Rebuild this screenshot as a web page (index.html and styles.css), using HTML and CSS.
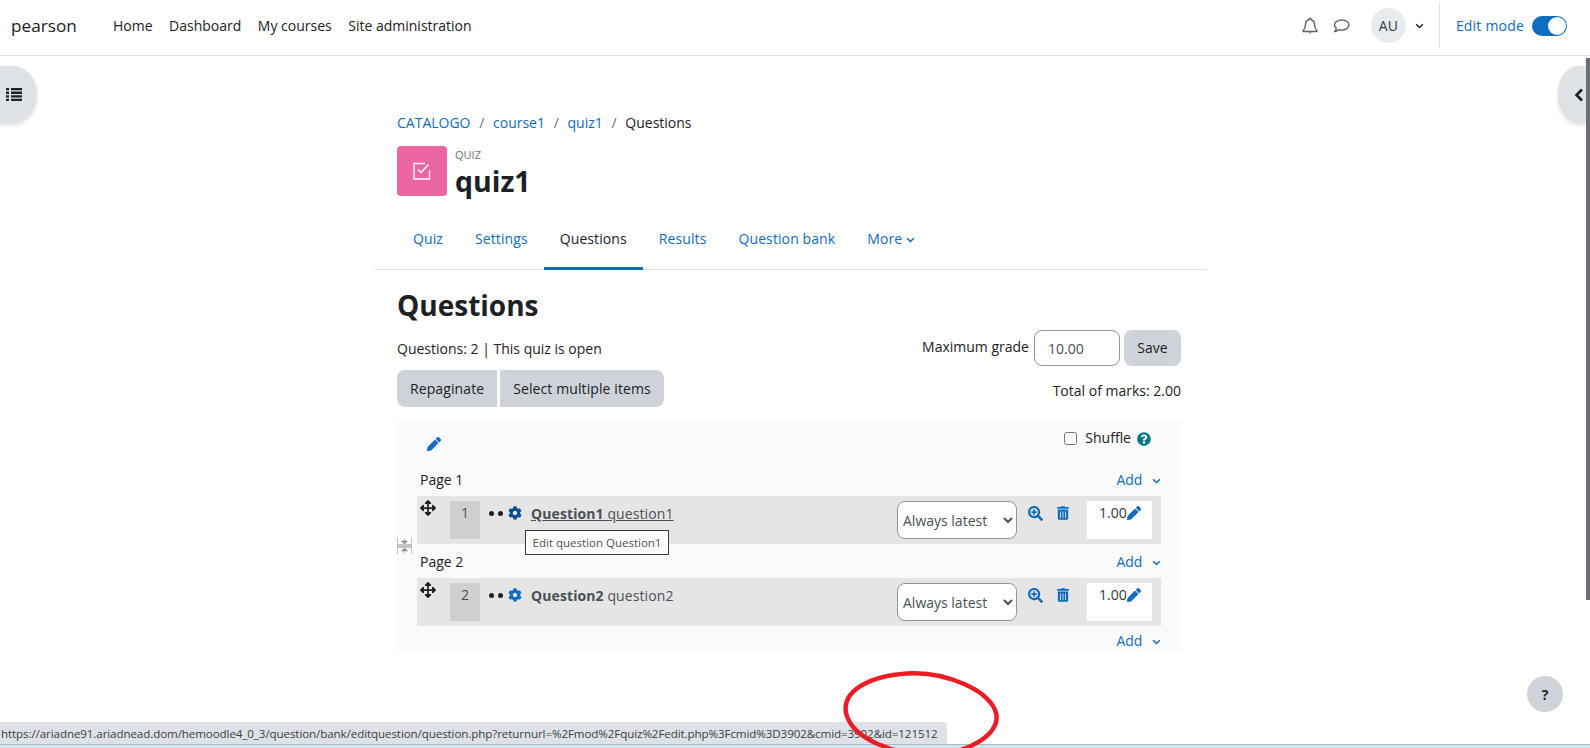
FILE: index.html
```html
<!DOCTYPE html>
<html lang="en">
<head>
<meta charset="utf-8">
<title>quiz1: Questions</title>
<link rel="stylesheet" href="styles.css">
</head>
<body>
<svg class="sprite" aria-hidden="true">
  <symbol id="i-pencil" viewBox="0 0 512 512"><path d="M497.900 142.100l-46.100 46.100c-4.700 4.700-12.300 4.700-17 0l-111-111c-4.700-4.700-4.700-12.300 0-17l46.100-46.100c18.700-18.700 49.100-18.700 67.900 0l60.100 60.100c18.800 18.700 18.800 49.100 0 67.900zM284.200 99.800L21.600 362.400.4 483.900c-2.900 16.400 11.400 30.600 27.800 27.800l121.500-21.300 262.600-262.600c4.700-4.700 4.700-12.300 0-17l-111-111c-4.800-4.700-12.400-4.700-17.100 0z"/></symbol>
  <symbol id="i-move" viewBox="0 0 512 512"><path d="M352.201 425.775l-79.196 79.196c-9.373 9.373-24.568 9.373-33.941 0l-79.196-79.196c-15.119-15.119-4.411-40.971 16.971-40.970h51.162L228 284H127.196v51.162c0 21.382-25.851 32.090-40.971 16.971L7.029 272.937c-9.373-9.373-9.373-24.569 0-33.941L86.225 159.800c15.119-15.119 40.971-4.411 40.971 16.971V228H228V127.196h-51.230c-21.382 0-32.090-25.851-16.971-40.971l79.196-79.196c9.373-9.373 24.568-9.373 33.941 0l79.196 79.196c15.119 15.119 4.411 40.971-16.971 40.971h-51.162V228h100.804v-51.162c0-21.382 25.851-32.090 40.970-16.971l79.196 79.196c9.373 9.373 9.373 24.569 0 33.941L425.773 352.200c-15.119 15.119-40.971 4.411-40.970-16.971V284H284v100.804h51.230c21.382 0 32.090 25.851 16.971 40.971z"/></symbol>
  <symbol id="i-gear" viewBox="0 0 512 512"><path d="M487.400 315.700l-42.600-24.600c4.300-23.200 4.300-47 0-70.200l42.600-24.600c4.900-2.800 7.100-8.600 5.500-14-11.100-35.600-30-67.800-54.700-94.600-3.800-4.100-10-5.100-14.800-2.300L380.800 110c-17.900-15.400-38.500-27.300-60.800-35.100V25.800c0-5.600-3.900-10.500-9.400-11.700-36.700-8.200-74.300-7.800-109.200 0-5.500 1.200-9.400 6.100-9.400 11.700V75c-22.200 7.900-42.800 19.800-60.800 35.100L88.700 85.500c-4.900-2.800-11-1.900-14.800 2.300-24.700 26.700-43.600 58.900-54.700 94.600-1.700 5.400.6 11.200 5.500 14L67.300 221c-4.300 23.200-4.300 47 0 70.200l-42.600 24.600c-4.900 2.800-7.100 8.600-5.500 14 11.100 35.600 30 67.800 54.700 94.600 3.800 4.100 10 5.100 14.800 2.300l42.600-24.600c17.900 15.400 38.500 27.300 60.800 35.100v49.200c0 5.600 3.900 10.500 9.400 11.700 36.700 8.200 74.300 7.800 109.200 0 5.500-1.200 9.400-6.100 9.400-11.700v-49.200c22.200-7.900 42.800-19.800 60.800-35.100l42.600 24.600c4.900 2.800 11 1.900 14.800-2.300 24.700-26.700 43.600-58.900 54.700-94.600 1.500-5.500-.7-11.300-5.600-14.100zM256 336c-44.100 0-80-35.900-80-80s35.900-80 80-80 80 35.900 80 80-35.900 80-80 80z"/></symbol>
  <symbol id="i-mag" viewBox="0 0 512 512"><path d="M304 192v32c0 6.600-5.400 12-12 12h-56v56c0 6.600-5.400 12-12 12h-32c-6.600 0-12-5.400-12-12v-56h-56c-6.600 0-12-5.400-12-12v-32c0-6.600 5.400-12 12-12h56v-56c0-6.600 5.400-12 12-12h32c6.600 0 12 5.400 12 12v56h56c6.600 0 12 5.400 12 12zm201 284.700L476.700 505c-9.400 9.400-24.600 9.400-33.900 0L343 405.300c-4.500-4.500-7-10.600-7-17V372c-35.300 27.600-79.700 44-128 44C93.100 416 0 322.900 0 208S93.100 0 208 0s208 93.100 208 208c0 48.300-16.400 92.700-44 128h16.300c6.400 0 12.500 2.500 17 7l99.700 99.700c9.300 9.400 9.300 24.600 0 34zM344 208c0-75.200-60.800-136-136-136S72 132.800 72 208s60.800 136 136 136 136-60.800 136-136z"/></symbol>
  <symbol id="i-trash" viewBox="0 0 448 512"><path d="M32 464a48 48 0 0 0 48 48h288a48 48 0 0 0 48-48V128H32zm272-256a16 16 0 0 1 32 0v224a16 16 0 0 1-32 0zm-96 0a16 16 0 0 1 32 0v224a16 16 0 0 1-32 0zm-96 0a16 16 0 0 1 32 0v224a16 16 0 0 1-32 0zM432 32H312l-9.400-18.700A24 24 0 0 0 281.100 0H166.800a23.720 23.720 0 0 0-21.400 13.300L136 32H16A16 16 0 0 0 0 48v32a16 16 0 0 0 16 16h416a16 16 0 0 0 16-16V48a16 16 0 0 0-16-16z"/></symbol>
  <symbol id="i-caret" viewBox="0 0 10 6"><path d="M1.200 1l3.800 3.700L8.800 1" fill="none" stroke="currentColor" stroke-width="1.700"/></symbol>
</svg>

<header class="navbar">
  <a class="brand">pearson</a>
  <nav class="primary">
    <a>Home</a><a>Dashboard</a><a>My courses</a><a>Site administration</a>
  </nav>
  <div class="nav-right">
    <svg class="nav-ico bell" viewBox="0 0 16 18"><path d="M8 1.200c-.7 0-1 .5-1 1v.5C4.700 3.200 3.500 5 3.500 7.200c0 3.300-.8 4.800-2.300 6.300v1h13.600v-1c-1.500-1.500-2.300-3-2.300-6.300 0-2.200-1.200-4-3.500-4.500v-.5c0-.5-.3-1-1-1z" fill="none" stroke="#5c646b" stroke-width="1.400"/><path d="M6.300 15.500a1.800 1.500 0 0 0 3.400 0z" fill="#5c646b"/></svg>
    <svg class="nav-ico chat" viewBox="0 0 18 16"><path d="M9 2c-4.200 0-7.500 2.200-7.500 5 0 1.300.7 2.400 1.800 3.300-.2 1.200-.9 2.400-1.500 3.200 1.500-.1 3.100-.9 4.100-1.700.9.200 1.800.3 2.600.3 4.200 0 7.500-2.300 7.500-5.100S13.200 2 9 2z" fill="none" stroke="#5c646b" stroke-width="1.400"/></svg>
    <span class="avatar">AU</span>
    <svg class="caret"><use href="#i-caret"/></svg>
    <span class="divider"></span>
    <span class="edit-label">Edit mode</span>
    <span class="toggle"><span class="knob"></span></span>
  </div>
</header>

<button class="drawer-btn left" aria-label="Open course index">
  <svg viewBox="0 0 16 13" width="16" height="13"><path d="M0 0h3v2.300H0zM5 0h11v2.300H5zM0 3.600h3v2.300H0zM5 3.600h11v2.300H5zM0 7.200h3v2.300H0zM5 7.200h11v2.300H5zM0 10.700h3V13H0zM5 10.700h11V13H5z" fill="#1d2125"/></svg>
</button>
<button class="drawer-btn right" aria-label="Open block drawer">
  <svg viewBox="0 0 10 14" width="10" height="14"><path d="M8 1.500L2.500 7 8 12.500" fill="none" stroke="#1d2125" stroke-width="2.600"/></svg>
</button>
<div class="scrollbar"></div>

<main class="main">
  <ol class="crumbs">
    <li><a>CATALOGO</a></li><li class="sep">/</li>
    <li><a>course1</a></li><li class="sep">/</li>
    <li><a>quiz1</a></li><li class="sep">/</li>
    <li>Questions</li>
  </ol>
  <div class="page-head">
    <div class="activity-icon">
      <svg viewBox="0 0 18 18" width="18" height="18"><path d="M16.500 8.500V17H1V1.500H12" fill="none" stroke="#fff" stroke-width="1.300"/><path d="M5 7.500l3 3L15.500 2.500" fill="none" stroke="#fff" stroke-width="1.500"/></svg>
    </div>
    <div>
      <div class="kicker">QUIZ</div>
      <h1 class="quiz-title">quiz1</h1>
    </div>
  </div>
  <nav class="tabs">
    <a>Quiz</a><a>Settings</a><a class="active">Questions</a><a>Results</a><a>Question bank</a>
    <a>More <svg class="tab-caret"><use href="#i-caret"/></svg></a>
  </nav>

  <section class="content">
    <h2 class="heading">Questions</h2>
    <div class="summary">
      <div class="summary-left">
        <p class="info">Questions: 2 | This quiz is open</p>
        <div class="btns"><button class="btn">Repaginate</button><button class="btn">Select multiple items</button></div>
      </div>
      <div class="summary-right">
        <div class="grade-row">
          <label class="grade-label">Maximum grade</label>
          <input class="grade-input" value="10.00">
          <button class="btn save">Save</button>
        </div>
        <p class="total">Total of marks: 2.00</p>
      </div>
    </div>

    <div class="panel">
      <svg class="gap-ico" viewBox="0 0 15 18"><path d="M0 1v7h15V1M0 17v-7h15v7" fill="none" stroke="#8a8f94" stroke-width="1"/><path d="M7.500 1.500v2M4.500 4h6L7.500 7zM7.500 16.500v-2M4.500 14h6l-3-3z" fill="#8a8f94" stroke="#8a8f94" stroke-width=".6"/></svg>
      <div class="panel-top">
        <svg class="pencil"><use href="#i-pencil"/></svg>
        <div class="shuffle">
          <input type="checkbox" class="check">
          <span>Shuffle</span>
          <svg class="help" viewBox="0 0 512 512"><path d="M504 256c0 136.997-111.043 248-248 248S8 392.997 8 256C8 119.083 119.043 8 256 8s248 111.083 248 248zM262.655 90c-54.497 0-89.255 22.957-116.549 63.758-3.536 5.286-2.353 12.415 2.715 16.258l34.699 26.310c5.205 3.947 12.621 3.008 16.665-2.122 17.864-22.658 30.113-35.797 57.303-35.797 20.429 0 45.698 13.148 45.698 32.958 0 14.976-12.363 22.667-32.534 33.976C247.128 238.528 216 254.941 216 296v4c0 6.627 5.373 12 12 12h56c6.627 0 12-5.373 12-12v-1.333c0-28.462 83.186-29.647 83.186-106.667 0-58.002-60.165-102-116.531-102zM256 338c-25.365 0-46 20.635-46 46 0 25.364 20.635 46 46 46s46-20.636 46-46c0-25.365-20.635-46-46-46z"/></svg>
        </div>
      </div>

      <div class="page-row"><span>Page 1</span><a class="add">Add <svg class="add-caret"><use href="#i-caret"/></svg></a></div>
      <div class="q-row">
        <svg class="move"><use href="#i-move"/></svg>
        <span class="q-num">1</span>
        <span class="dots"><i></i><i></i></span>
        <svg class="gear dark"><use href="#i-gear"/></svg>
        <a class="q-name linked"><b>Question1</b> question1</a>
        <span class="tooltip">Edit question Question1</span>
        <select class="version"><option>Always latest</option></select>
        <svg class="act mag"><use href="#i-mag"/></svg>
        <svg class="act trash"><use href="#i-trash"/></svg>
        <span class="mark">1.00<svg class="pencil small"><use href="#i-pencil"/></svg></span>
      </div>

      <div class="page-row"><span>Page 2</span><a class="add">Add <svg class="add-caret"><use href="#i-caret"/></svg></a></div>
      <div class="q-row">
        <svg class="move"><use href="#i-move"/></svg>
        <span class="q-num">2</span>
        <span class="dots"><i></i><i></i></span>
        <svg class="gear"><use href="#i-gear"/></svg>
        <a class="q-name"><b>Question2</b> question2</a>
        <select class="version"><option>Always latest</option></select>
        <svg class="act mag"><use href="#i-mag"/></svg>
        <svg class="act trash"><use href="#i-trash"/></svg>
        <span class="mark">1.00<svg class="pencil small"><use href="#i-pencil"/></svg></span>
      </div>
      <div class="page-row last"><span></span><a class="add">Add <svg class="add-caret"><use href="#i-caret"/></svg></a></div>
    </div>
  </section>
</main>

<button class="help-btn" aria-label="Help">?</button>
<div class="status-url">https://ariadne91.ariadnead.dom/hemoodle4_0_3/question/bank/editquestion/question.php?returnurl=%2Fmod%2Fquiz%2Fedit.php%3Fcmid%3D3902&amp;cmid=3902&amp;id=121512</div>
<div class="taskbar"></div>
<svg class="annotation" viewBox="0 0 170 90" width="170" height="90"><path d="M72 4.500C110 2 158 22 161.500 46c2 20-28 38-62 39.500C60 87 17 70 11 44 7 22 34 7 72 4.500z" fill="none" stroke="#ed1c24" stroke-width="4.500"/></svg>
</body>
</html>
```

FILE: styles.css
```css
* { box-sizing: border-box; }
html, body { height: 100%; }
body {
  margin: 0;
  overflow: hidden;
  background: #fff;
  color: #1d2125;
  font-family: "Open Sans", "Noto Sans", "Liberation Sans", sans-serif;
  font-size: 14px;
  font-stretch: 92%;
  line-height: 22px;
}
a { color: #0f6cbf; text-decoration: none; }
p { margin: 0; }
.sprite { display: none; }

/* navbar */
.navbar {
  display: flex;
  align-items: center;
  height: 56px;
  padding: 0 0 4px 11px;
  border-bottom: 1px solid #dee2e6;
}
.brand { color: #1d2125; font-size: 17.2px; width: 102px; }
.primary { display: flex; gap: 16.500px; }
.primary a { color: #1d2125; }
.nav-right {
  margin-left: auto;
  display: flex;
  align-items: center;
  padding-right: 23px;
}
.nav-ico { display: block; }
.bell { width: 16px; height: 18px; }
.chat { width: 18px; height: 16px; margin-left: 15px; }
.avatar {
  width: 35px; height: 35px;
  margin-left: 20px;
  border-radius: 50%;
  background: #e9ecef;
  display: flex; align-items: center; justify-content: center;
  color: #343a40;
}
.caret { width: 9px; height: 6px; margin-left: 9px; color: #1d2125; }
.divider { width: 1px; height: 45px; background: #dee2e6; margin: 0 16px 0 15px; }
.edit-label { color: #0f6cbf; letter-spacing: .2px; }
.toggle {
  width: 35px; height: 20px;
  margin-left: 8px;
  border-radius: 10px;
  background: #0f6cbf;
  position: relative;
}
.knob {
  position: absolute;
  right: 1px; top: 1px;
  width: 18px; height: 18px;
  border-radius: 50%;
  background: #fff;
}

/* drawers */
.drawer-btn {
  position: absolute;
  top: 66px;
  height: 57px;
  border: 0;
  padding: 0;
  background: #dee2e6;
  box-shadow: 0 2px 4px rgba(0,0,0,.12);
  display: flex; align-items: center;
}
.drawer-btn.left { left: -11px; width: 48px; border-radius: 0 50% 50% 0 / 0 50% 50% 0; padding-left: 17px; }
.drawer-btn.right { left: 1558px; width: 40px; border-radius: 50% 0 0 50% / 50% 0 0 50%; padding-left: 16px; }
.scrollbar {
  position: absolute;
  left: 1586px; top: 58px;
  width: 4px; height: 542px;
  background: #6a6f75;
}

/* main column */
.main { width: 831px; margin-left: 374px; padding-top: 56px; }
.crumbs {
  display: flex;
  list-style: none;
  margin: 0 0 12px;
  padding: 0 0 0 23px;
  height: 22px;
}
.crumbs .sep { color: #6a737b; margin: 0 8.700px; }
.page-head { display: flex; gap: 8px; padding-left: 23px; height: 50px; }
.activity-icon {
  width: 50px; height: 50px;
  border-radius: 4px;
  background: #eb66a2;
  display: flex; align-items: center; justify-content: center;
}
.kicker { font-size: 11px; line-height: 14px; color: #6a737b; margin-top: 2px; }
.quiz-title { margin: 2px 0 0; font-size: 28.5px; line-height: 34px; font-weight: 700; }

.tabs {
  display: flex;
  margin-top: 20px;
  padding-left: 23px;
  height: 54px;
  border-bottom: 1px solid #dee2e6;
  letter-spacing: .1px;
}
.tabs a {
  padding: 12px 16px 0;
  height: 54px;
}
.tabs a.active { color: #1d2125; border-bottom: 3px solid #0f6cbf; }
.tab-caret { width: 9px; height: 6px; vertical-align: 1px; color: #0f6cbf; }

.content { padding: 18px 24px 0 23px; }
.heading { margin: 0 0 10px; font-size: 28px; line-height: 34px; font-weight: 700; }
.summary { display: flex; justify-content: space-between; height: 92px; margin-top: -3px; }
.info { margin-top: 9px; }
.btns { display: flex; gap: 3px; margin-top: 10px; letter-spacing: .1px; }
.btn {
  height: 37px;
  padding: 0 13px;
  border: 0;
  background: #ced3da;
  color: #1d2125;
  font: inherit;
  letter-spacing: inherit;
}
.btns .btn:first-child { border-radius: 8px 0 0 8px; }
.btns .btn:last-child { border-radius: 0 8px 8px 0; }
.summary-right { display: flex; flex-direction: column; align-items: flex-end; margin-top: 1px; }
.grade-row { display: flex; align-items: center; }
.grade-label { margin: -2px 5px 0 0; }
.grade-input {
  width: 86px; height: 36px;
  padding: 0 13px;
  border: 1px solid #8f959e;
  border-radius: 8px;
  color: #495057;
  font: inherit;
}
.save { width: 57px; padding: 0; height: 36px; margin-left: 4px; border-radius: 8px; }
.total { margin-top: 14px; }

/* question panel */
.panel {
  position: relative;
  height: 231px;
  padding: 0 20px;
  background: #fafafa;
}
.gap-ico { position: absolute; left: 0; top: 116px; width: 15px; height: 18px; }
.panel-top { display: flex; justify-content: space-between; height: 41px; }
.pencil { width: 14px; height: 14px; margin: 16px 0 0 10px; fill: #0f6cbf; }
.shuffle { display: flex; align-items: center; gap: 8px; height: 22px; margin: 6px 10px 0 0; }
.check { width: 13px; height: 13px; margin: 1px 0 0; border-radius: 3px; }
.help { width: 14px; height: 14px; fill: #007a8a; margin: 2px 0 0 -2px; }
.page-row {
  display: flex; justify-content: space-between; align-items: center;
  height: 34px;
  padding: 2px 0 0 3px;
}
.page-row.last { height: 26px; padding-top: 4px; }
.add-caret { width: 9px; height: 6px; margin-left: 6px; vertical-align: 1px; color: #0f6cbf; }

.q-row {
  position: relative;
  display: flex;
  align-items: flex-start;
  height: 48px;
  padding: 5px 9px 0 0;
  background: #e5e5e5;
  color: #495057;
}
.q-row > * { flex: none; }
.move { width: 16px; height: 16px; margin: -1px 14px 0 3px; fill: #1d2125; }
.q-num {
  width: 30px; height: 38px;
  background: #d0d0d0;
  text-align: center;
  padding-top: 1px;
}
.dots { display: flex; gap: 4px; margin: 10px 5px 0 9px; }
.dots i { width: 5px; height: 5px; border-radius: 50%; background: #1d2125; }
.gear { width: 14px; height: 14px; margin: 5px 9px 0 0; fill: #0f6cbf; }
.gear.dark { fill: #0a4f8f; }
.q-name { color: #495057; margin-top: 2px; letter-spacing: .1px; }
.q-name.linked { text-decoration: underline; }
.q-name b { font-weight: 700; }
.tooltip {
  position: absolute;
  left: 108px; top: 34px;
  width: 144px; height: 25px;
  border: 1px solid #343a40;
  background: #fff;
  color: #495057;
  font-size: 11.5px;
  line-height: 23px;
  text-align: center;
  z-index: 2;
}
.version {
  width: 120px; height: 38px;
  margin-left: auto;
  padding: 0 1px;
  border: 1px solid #8f959e;
  border-radius: 8px;
  background-color: #fff;
  color: #495057;
  font: inherit;
}
.act { fill: #0f6cbf; margin-top: 5px; }
.mag { width: 15px; height: 15px; margin-left: 11px; }
.trash { width: 12px; height: 14px; margin-left: 14px; }
.mark {
  width: 65px; height: 38px;
  margin-left: 18px;
  padding: 1px 0 0 12px;
  background: #fff;
  color: #343a40;
  white-space: nowrap;
}
.pencil.small { width: 14px; height: 14px; margin: 0; vertical-align: -2px; }

/* overlays */
.help-btn {
  position: absolute;
  left: 1527px; top: 676px;
  width: 36px; height: 36px;
  padding: 0;
  border: 0;
  border-radius: 50%;
  background: #ced4da;
  color: #1d2125;
  font: 700 14px "Open Sans", sans-serif;
}
.status-url {
  position: absolute;
  left: 0; top: 722px;
  width: 947px; height: 22px;
  padding-left: 1px;
  border-radius: 0 4px 0 0;
  background: #dee2e6;
  color: #3a3f44;
  font-size: 11.6px;
  letter-spacing: -0.1px;
  line-height: 23px;
  white-space: nowrap;
  overflow: hidden;
}
.taskbar {
  position: absolute;
  left: 0; top: 744px;
  width: 1590px; height: 4px;
  border-top: 1px solid #a9b8bf;
  background: #cfe6ee;
}
.annotation { position: absolute; left: 835px; top: 669px; z-index: 3; overflow: visible; }
```
